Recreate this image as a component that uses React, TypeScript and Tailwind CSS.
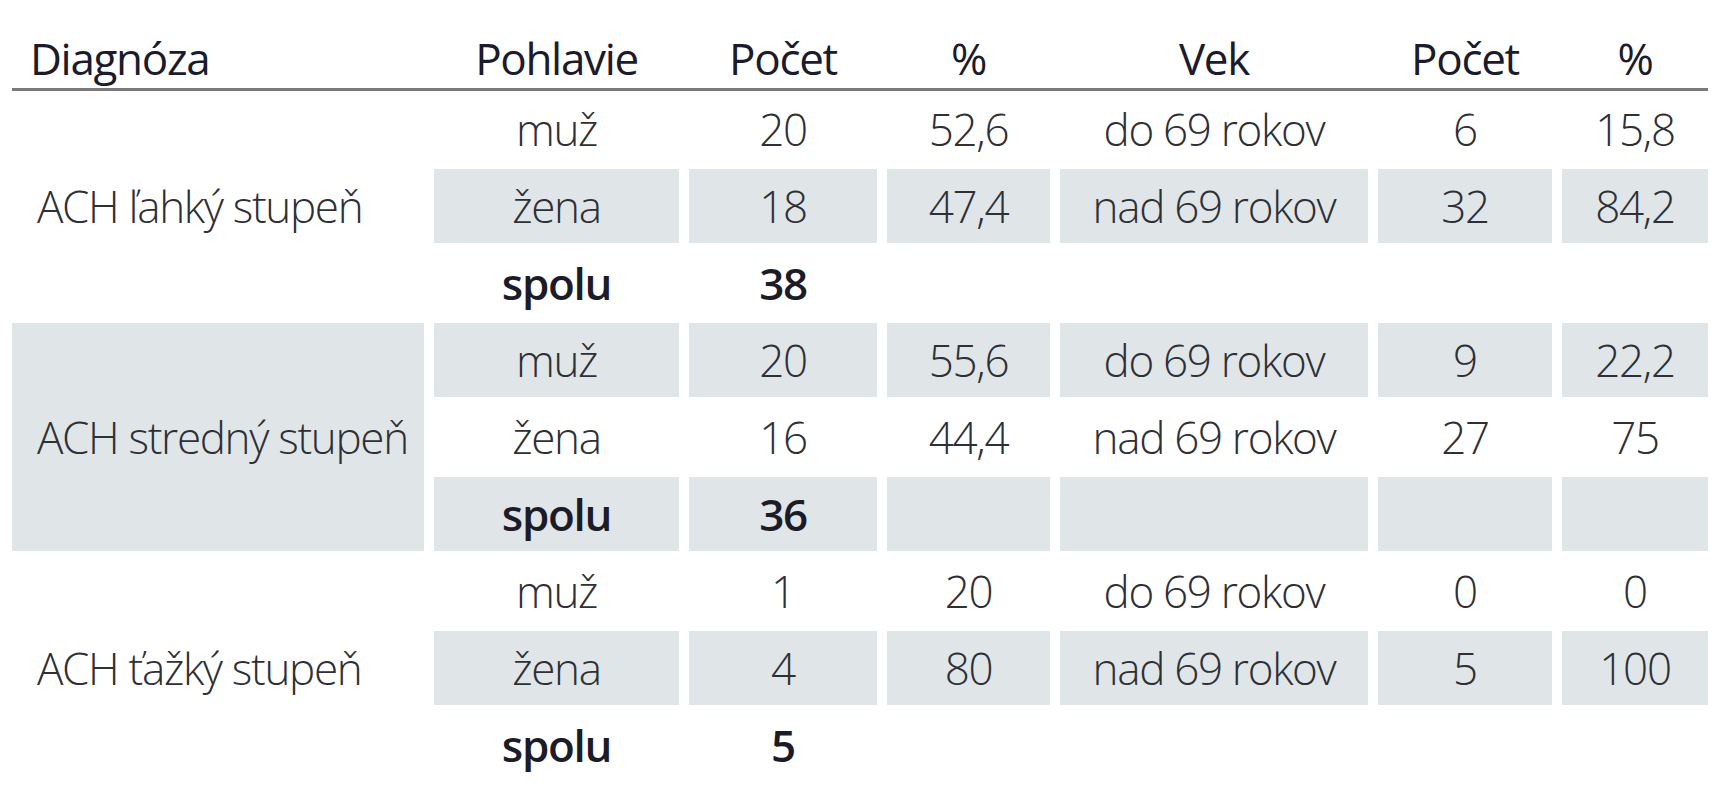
import React from "react";

type Row = { sex: string; count: string; pct: string; age: string; ageCount: string; agePct: string; total?: boolean };
type Group = { label: string; rows: Row[]; shadeLabel: boolean };

const GROUPS: Group[] = [
  {
    label: "ACH ľahký stupeň",
    shadeLabel: false,
    rows: [
      { sex: "muž", count: "20", pct: "52,6", age: "do 69 rokov", ageCount: "6", agePct: "15,8" },
      { sex: "žena", count: "18", pct: "47,4", age: "nad 69 rokov", ageCount: "32", agePct: "84,2" },
      { sex: "spolu", count: "38", pct: "", age: "", ageCount: "", agePct: "", total: true },
    ],
  },
  {
    label: "ACH stredný stupeň",
    shadeLabel: true,
    rows: [
      { sex: "muž", count: "20", pct: "55,6", age: "do 69 rokov", ageCount: "9", agePct: "22,2" },
      { sex: "žena", count: "16", pct: "44,4", age: "nad 69 rokov", ageCount: "27", agePct: "75" },
      { sex: "spolu", count: "36", pct: "", age: "", ageCount: "", agePct: "", total: true },
    ],
  },
  {
    label: "ACH ťažký stupeň",
    shadeLabel: false,
    rows: [
      { sex: "muž", count: "1", pct: "20", age: "do 69 rokov", ageCount: "0", agePct: "0" },
      { sex: "žena", count: "4", pct: "80", age: "nad 69 rokov", ageCount: "5", agePct: "100" },
      { sex: "spolu", count: "5", pct: "", age: "", ageCount: "", agePct: "", total: true },
    ],
  },
];

// column widths measured off the picture, 10px gutters between them
const COLS = "grid grid-cols-[412px_245px_188px_163px_308px_174px_146px] gap-x-[10px]";

function Cell({ children, shaded, bold }: { children?: React.ReactNode; shaded: boolean; bold?: boolean }) {
  return (
    <div
      className={`flex h-[74px] items-center justify-center ${shaded ? "bg-[#e0e6e8]" : ""} ${
        bold ? "font-semibold text-[#1c1c28]" : "font-light text-[#2e3036]"
      }`}
    >
      {children}
    </div>
  );
}

export default function App() {
  let rowIndex = 0;
  return (
    <div className="min-h-[800px] w-[1727px] bg-white pl-[12px] font-['Open_Sans',sans-serif] text-[44px] leading-none tracking-[-0.03em]">
      <div className="w-[1696px]">
        <div className={`${COLS} h-[91px] items-end border-b-[3px] border-[#7a7a7a] pb-[8px] text-[#1b1b2b]`}>
          <div className="pl-[18px]">Diagnóza</div>
          <div className="text-center">Pohlavie</div>
          <div className="text-center">Počet</div>
          <div className="text-center">%</div>
          <div className="text-center">Vek</div>
          <div className="text-center">Počet</div>
          <div className="text-center">%</div>
        </div>
        <div className={`${COLS} mt-[1px] gap-y-[3px]`}>
          {GROUPS.map((g) => {
            const start = rowIndex;
            rowIndex += g.rows.length;
            return (
              <React.Fragment key={g.label}>
                <div
                  className={`flex items-center whitespace-nowrap pl-[25px] font-light text-[#2e3036] ${
                    g.shadeLabel ? "bg-[#e0e6e8]" : ""
                  }`}
                  style={{ gridRow: `${start + 1} / span 3`, gridColumn: 1 }}
                >
                  {g.label}
                </div>
                {g.rows.map((r, i) => {
                  const shaded = (start + i) % 2 === 1;
                  return (
                    <React.Fragment key={i}>
                      <Cell shaded={shaded} bold={r.total}>{r.sex}</Cell>
                      <Cell shaded={shaded} bold={r.total}>{r.count}</Cell>
                      <Cell shaded={shaded}>{r.pct}</Cell>
                      <Cell shaded={shaded}>{r.age}</Cell>
                      <Cell shaded={shaded}>{r.ageCount}</Cell>
                      <Cell shaded={shaded}>{r.agePct}</Cell>
                    </React.Fragment>
                  );
                })}
              </React.Fragment>
            );
          })}
        </div>
      </div>
    </div>
  );
}
